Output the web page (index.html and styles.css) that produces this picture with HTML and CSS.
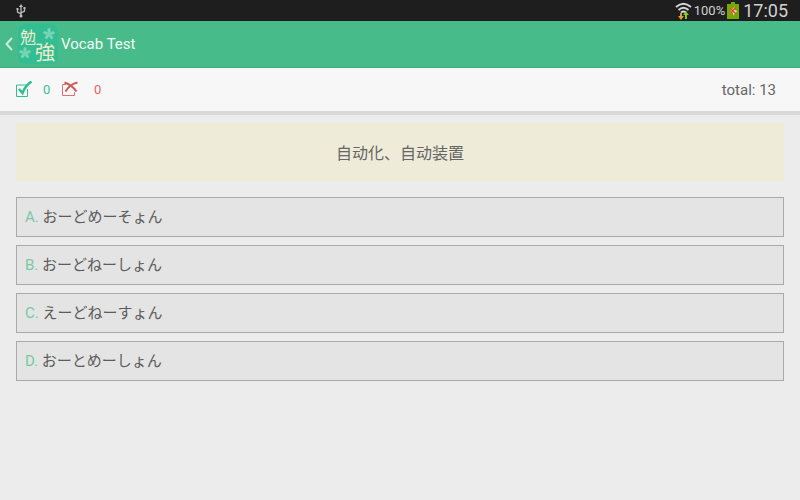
FILE: index.html
```html
<!DOCTYPE html>
<html lang="ja">
<head>
<meta charset="utf-8">
<meta name="viewport" content="width=device-width, initial-scale=1">
<title>Vocab Test</title>
<link rel="stylesheet" href="styles.css">
</head>
<body>
<div class="status">
  <svg class="usb" width="10" height="14" viewBox="0 0 10 14" fill="none" stroke="#bdbdbd" stroke-width="1.300"><path d="M5 2v10M5 10L1.500 8V5M5 9l3.500-2V4"/><path d="M5 0L3 3h4zM.5 4h2v2h-2zM7.500 3h2v2h-2z" fill="#bdbdbd" stroke="none"/><circle cx="5" cy="12" r="1.500" fill="#bdbdbd" stroke="none"/></svg>
  <div class="status-right">
    <svg width="17" height="18" viewBox="0 0 17 18" fill="none"><g stroke="#d6d6d6" stroke-width="2"><path d="M1 5Q8.500-1.500 16 5"/><path d="M3.500 8Q8.500 3.500 13.500 8"/><path d="M6 10.500Q8.500 8.500 11 10.500"/></g><path d="M5 11h2v3h2l-3 4-3-4h2z" fill="#e39a34"/><path d="M10 17v-4H8l3-3.500 3 3.500h-2v4z" fill="#8cc820"/></svg>
    <span class="percent">100%</span>
    <svg class="battery" width="12" height="17" viewBox="0 0 12 17"><path d="M4 0h4v2h4v15H0V2h4z" fill="#76a803"/><path d="M2.500 5.500l3 1.500L8 4.500 7.500 8 10 9 6.500 13.500 6 10.500 2.500 12 4.500 9z" fill="#f5dccb"/><path d="M3 6l6 6M8.500 5.500l-5 6" stroke="#dc4b37" stroke-width="1.500"/></svg>
    <time class="clock">17:05</time>
  </div>
</div>
<header class="appbar">
  <a class="back" href="#" aria-label="Back"><svg width="8" height="14" viewBox="0 0 8 14" fill="none" stroke="#c9eddc" stroke-width="2"><path d="M7 1L1.500 7 7 13"/></svg></a>
  <svg class="logo" width="42" height="42" viewBox="0 0 42 42">
    <rect x="1" y="1" width="40" height="40" rx="7" fill="#33bd93"/>
    <defs><g id="flower" fill="#7bd5b5"><ellipse cy="-3.500" rx="1.600" ry="2.500"/><ellipse cy="-3.500" rx="1.600" ry="2.500" transform="rotate(72)"/><ellipse cy="-3.500" rx="1.600" ry="2.500" transform="rotate(144)"/><ellipse cy="-3.500" rx="1.600" ry="2.500" transform="rotate(216)"/><ellipse cy="-3.500" rx="1.600" ry="2.500" transform="rotate(288)"/><circle r="1.500"/></g></defs>
    <use href="#flower" x="32" y="11"/><use href="#flower" x="8" y="30"/>
    <text class="logo-text" x="3" y="20" font-size="16">勉</text>
    <text class="logo-text" x="18" y="37" font-size="20">強</text>
  </svg>
  <h1>Vocab Test</h1>
</header>
<div class="score">
  <svg width="18" height="18" viewBox="0 0 18 18" fill="none" stroke="#2fbf8f"><path d="M12 4H1.500v11.500h11V8"/><path d="M4 8l3.500 4Q10 5 16.500 .5" stroke-width="2.500"/></svg>
  <span class="right">0</span>
  <svg width="18" height="18" viewBox="0 0 18 18" fill="none" stroke="#dc7373"><path d="M5 3.500H1.500v11h12V11"/><path d="M3.500 1.500Q11 4 15.500 10.500M16.500 1.500Q9 3 4.500 10.500" stroke="#cd5757" stroke-width="2"/></svg>
  <span class="wrong">0</span>
  <span class="total">total: 13</span>
</div>
<main>
  <p class="prompt">自动化、自动装置</p>
  <div class="answers">
    <button type="button"><span class="letter">A.</span> おーどめーそょん</button>
    <button type="button"><span class="letter">B.</span> おーどねーしょん</button>
    <button type="button"><span class="letter">C.</span> えーどねーすょん</button>
    <button type="button"><span class="letter">D.</span> おーとめーしょん</button>
  </div>
</main>
</body>
</html>
```
FILE: styles.css
```css
* { box-sizing: border-box; }
body {
  margin: 0;
  min-height: 100vh;
  background: #ececec;
  color: #666;
  font-family: Roboto, "Noto Sans CJK JP", sans-serif;
}
svg { display: block; flex: none; }
.status {
  display: flex;
  align-items: center;
  justify-content: space-between;
  height: 21px;
  padding: 0 12px 0 16px;
  background: #1e1e1e;
  color: #d2d2d2;
}
.status-right { display: flex; align-items: center; gap: 2px; }
.percent { font-size: 13px; }
.clock { margin-left: 2px; font-size: 18px; line-height: 20px; }
.appbar {
  display: flex;
  align-items: center;
  height: 47px;
  padding-left: 5px;
  background: #47bb8a;
  border-bottom: 1px solid #3cae7e;
}
.logo { margin-left: 4px; overflow: visible; }
.logo-text { fill: #f1ebcb; font-family: "Noto Sans CJK JP", sans-serif; }
h1 { margin: 0 0 0 2px; color: #f2fbf7; font-size: 15px; font-weight: 400; }
.score {
  display: flex;
  align-items: center;
  height: 47px;
  padding: 0 24px 0 15px;
  background: #f7f7f7;
  border-bottom: 4px solid #d9d9d9;
  font-size: 13px;
}
.right { width: 28px; padding-left: 10px; color: #38c295; }
.wrong { padding-left: 15px; color: #e86464; }
.total { margin-left: auto; font-size: 15px; }
main { padding: 8px 16px; }
.prompt {
  margin: 0 0 16px;
  padding: 17px;
  background: #eeebd8;
  font-family: "Noto Sans CJK SC", sans-serif;
  font-size: 16px;
  line-height: 24px;
  text-align: center;
}
.answers { display: grid; gap: 8px; }
button {
  padding: 8px;
  background: #e4e4e4;
  border: 1px solid #aaa;
  color: #5c5c5c;
  font: 15px/22px Roboto, "Noto Sans CJK JP", sans-serif;
  text-align: left;
}
.letter { color: #77c9a9; }
```
